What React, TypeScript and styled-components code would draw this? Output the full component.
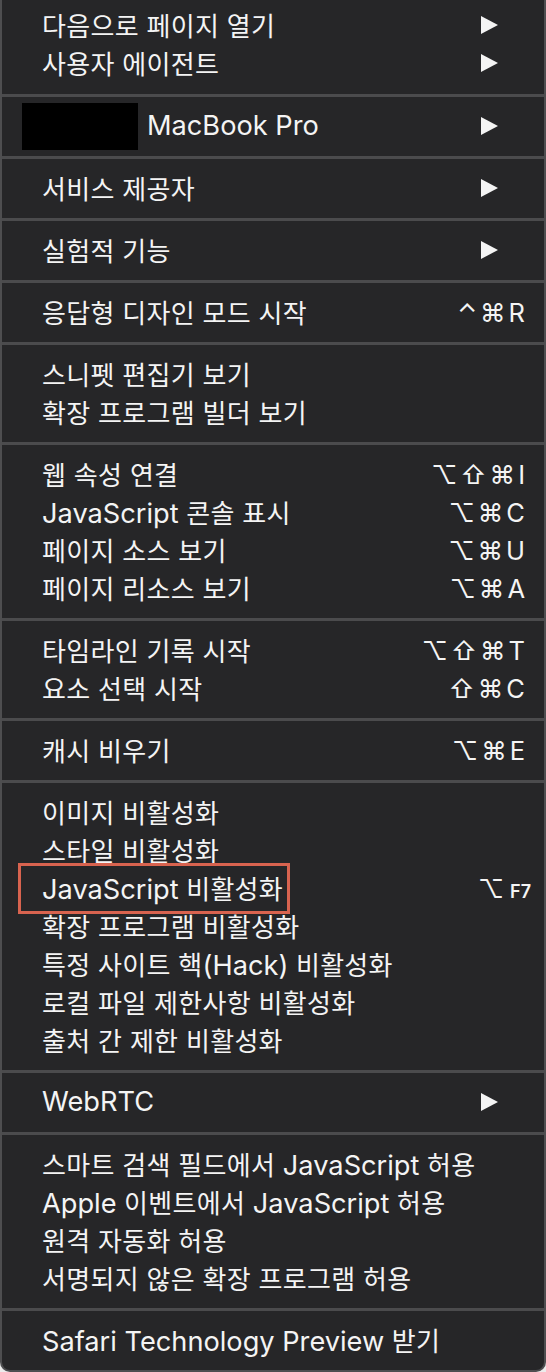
import styled, { createGlobalStyle } from 'styled-components';

type Item = {
  label: string;
  shortcut?: string;
  fkey?: string;
  submenu?: boolean;
  redacted?: boolean;
  marked?: boolean;
};

const groups: Item[][] = [
  [
    { label: '다음으로 페이지 열기', submenu: true },
    { label: '사용자 에이전트', submenu: true },
  ],
  [{ label: 'MacBook Pro', submenu: true, redacted: true }],
  [{ label: '서비스 제공자', submenu: true }],
  [{ label: '실험적 기능', submenu: true }],
  [{ label: '응답형 디자인 모드 시작', shortcut: '⌃⌘R' }],
  [{ label: '스니펫 편집기 보기' }, { label: '확장 프로그램 빌더 보기' }],
  [
    { label: '웹 속성 연결', shortcut: '⌥⇧⌘I' },
    { label: 'JavaScript 콘솔 표시', shortcut: '⌥⌘C' },
    { label: '페이지 소스 보기', shortcut: '⌥⌘U' },
    { label: '페이지 리소스 보기', shortcut: '⌥⌘A' },
  ],
  [
    { label: '타임라인 기록 시작', shortcut: '⌥⇧⌘T' },
    { label: '요소 선택 시작', shortcut: '⇧⌘C' },
  ],
  [{ label: '캐시 비우기', shortcut: '⌥⌘E' }],
  [
    { label: '이미지 비활성화' },
    { label: '스타일 비활성화' },
    { label: 'JavaScript 비활성화', shortcut: '⌥', fkey: 'F7', marked: true },
    { label: '확장 프로그램 비활성화' },
    { label: '특정 사이트 핵(Hack) 비활성화' },
    { label: '로컬 파일 제한사항 비활성화' },
    { label: '출처 간 제한 비활성화' },
  ],
  [{ label: 'WebRTC', submenu: true }],
  [
    { label: '스마트 검색 필드에서 JavaScript 허용' },
    { label: 'Apple 이벤트에서 JavaScript 허용' },
    { label: '원격 자동화 허용' },
    { label: '서명되지 않은 확장 프로그램 허용' },
  ],
  [{ label: 'Safari Technology Preview 받기' }],
];

const GlobalStyle = createGlobalStyle`
  html, body {
    margin: 0;
    padding: 0;
    background: #ececec;
  }
  body {
    font-family: "Inter", "Noto Sans CJK KR", sans-serif;
    -webkit-font-smoothing: antialiased;
  }
`;

const Menu = styled.div`
  width: 542px;
  background: #262628;
  border: 2px solid #4e4e50;
  border-top: none;
  border-radius: 0 0 10px 10px;
  overflow: hidden;
`;

const Group = styled.div<{ first?: boolean }>`
  padding: ${({ first }) => (first ? '6px 0 12px' : '10px 0 11px')};
  & + & {
    border-top: 3px solid #4b4b4d;
  }
`;

const Row = styled.div`
  display: flex;
  align-items: center;
  height: 38px;
  padding: 0 19px 0 40px;
  color: #f4f4f4;
`;

const Label = styled.span<{ marked?: boolean }>`
  position: relative;
  top: -1px;
  font-size: 26px;
  letter-spacing: 0.3px;
  white-space: nowrap;
  ${({ marked }) =>
    marked &&
    `
    &::after {
      content: '';
      position: absolute;
      top: -6px;
      bottom: -8px;
      left: -24px;
      right: -7px;
      border: 3px solid #d8634f;
    }
  `}
`;

const Latin = styled.span`
  font-size: 27.2px;
  letter-spacing: 0;
`;

const Redacted = styled.span`
  width: 116px;
  height: 47px;
  margin: 0 9px 0 -20px;
  background: #000;
`;

const Shortcut = styled.span`
  margin-left: auto;
  display: flex;
  align-items: baseline;
  font-family: "Inter", "DejaVu Sans", sans-serif;
  font-size: 25.5px;
  letter-spacing: 3px;
  margin-right: -3px;
  color: #f4f4f4;
`;

const FKey = styled.span`
  font-size: 18px;
  font-weight: 600;
  letter-spacing: 0;
  margin-left: 3px;
  margin-right: -3px;
`;

const Arrow = styled.svg`
  margin-left: auto;
  margin-right: 27px;
  width: 17px;
  height: 18px;
  fill: #f4f4f4;
`;

const splitScripts = (text: string) =>
  text.split(/([A-Za-z0-9()]+(?:\s+[A-Za-z0-9()]+)*)/).filter(Boolean);

const MenuRow = ({ item }: { item: Item }) => (
  <Row>
    {item.redacted && <Redacted />}
    <Label marked={item.marked}>
      {splitScripts(item.label).map((part, i) =>
        /[A-Za-z]/.test(part) ? <Latin key={i}>{part}</Latin> : part,
      )}
    </Label>
    {item.shortcut && (
      <Shortcut>
        {item.shortcut}
        {item.fkey && <FKey>{item.fkey}</FKey>}
      </Shortcut>
    )}
    {item.submenu && (
      <Arrow viewBox="0 0 17 18">
        <path d="M0 0 L17 9 L0 18 Z" />
      </Arrow>
    )}
  </Row>
);

const App = () => (
  <>
    <GlobalStyle />
    <Menu>
      {groups.map((group, i) => (
        <Group key={i} first={i === 0}>
          {group.map((item) => (
            <MenuRow key={item.label} item={item} />
          ))}
        </Group>
      ))}
    </Menu>
  </>
);

export default App;
